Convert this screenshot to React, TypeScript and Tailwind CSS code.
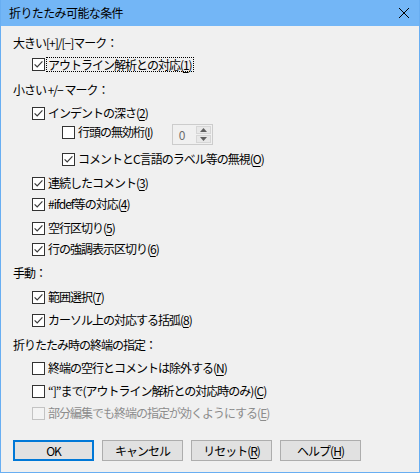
import React from "react";

const font = { fontFamily: '"Noto Sans CJK JP", "Noto Sans", sans-serif' };

function Label({ text }: { text: string }) {
  const i = text.indexOf("&");
  if (i < 0) return <>{text}</>;
  return (
    <>
      {text.slice(0, i)}
      <span className="underline underline-offset-[2px]">{text[i + 1]}</span>
      {text.slice(i + 2)}
    </>
  );
}

function Box({ checked, disabled }: { checked?: boolean; disabled?: boolean }) {
  return (
    <span
      className={
        disabled
          ? "grid size-[13px] shrink-0 place-items-center border border-[#c3c3c3] bg-[#f3f3f3]"
          : "grid size-[13px] shrink-0 place-items-center border border-[#333333] bg-white"
      }
    >
      {checked && (
        <svg width="11" height="11" viewBox="0 0 11 11">
          <path d="M1.6 5.4 L4.2 8 L9.4 2.4" fill="none" stroke="#3a3a3a" strokeWidth="1.2" />
        </svg>
      )}
    </span>
  );
}

function Check({
  label,
  checked = false,
  disabled = false,
  focus = false,
  className = "",
  children,
}: {
  label: string;
  checked?: boolean;
  disabled?: boolean;
  focus?: boolean;
  className?: string;
  children?: React.ReactNode;
}) {
  return (
    <div className={`flex h-[14px] items-center ${className}`}>
      <Box checked={checked} disabled={disabled} />
      <span
        className={
          focus
            ? "ml-[1px] border border-dotted border-black px-[1px] leading-[13px]"
            : disabled
              ? "ml-[3px] text-[#8c8c8c]"
              : "ml-[3px]"
        }
      >
        <Label text={label} />
      </span>
      {children}
    </div>
  );
}

function Btn({ label, primary = false }: { label: string; primary?: boolean }) {
  return (
    <button
      className={
        primary
          ? "h-[21px] w-[81px] border-2 border-[#0078d7] bg-[#e1e1e1] text-[12px]"
          : "h-[21px] w-[81px] border border-[#adadad] bg-[#e1e1e1] text-[12px]"
      }
    >
      <Label text={label} />
    </button>
  );
}

export default function App() {
  return (
    <div
      className="flex h-[473px] w-[420px] flex-col border-x border-b border-[#68aef2] bg-[#f0f0f0] text-[12px] tracking-[-1px] text-black"
      style={font}
    >
      <div className="flex h-[26px] shrink-0 items-center bg-[#73b6f6] pl-[8px]">
        <span className="tracking-[-0.6px]">折りたたみ可能な条件</span>
        <svg className="ml-auto mr-[9px]" width="12" height="12" viewBox="0 0 12 12">
          <path d="M1 1 L11 11 M11 1 L1 11" stroke="#000" strokeWidth="1" />
        </svg>
      </div>
      <div className="flex flex-col pl-[12px]">
        <div className="mt-[10px] flex h-[14px] items-center">大きい[+]/[−]マーク：</div>
        <div className="ml-[19px] flex flex-col">
          <Check className="mt-[7px]" checked focus label="アウトライン解析との対応(&1)" />
        </div>
        <div className="mt-[12px] flex h-[14px] items-center">小さい +/− マーク：</div>
        <div className="ml-[19px] flex flex-col">
          <Check className="mt-[9px]" checked label="インデントの深さ(&2)" />
          <Check className="mt-[5px] ml-[30px]" label="行頭の無効桁(&I)">
            <div className="ml-[19px] -mt-[1px] flex h-[21px] w-[41px] self-start border border-[#cccccc] bg-[#f0f0f0]">
              <span className="pl-[6px] pt-[1px] text-[#6d6d6d]">0</span>
              <div className="ml-auto flex w-[17px] flex-col gap-[1px] p-[1px]">
                <span className="grid h-[8px] place-items-center border border-[#d6d6d6] bg-[#e8e8e8]">
                  <svg width="7" height="4" viewBox="0 0 7 4">
                    <path d="M0 4 L3.5 0 L7 4 Z" fill="#606060" />
                  </svg>
                </span>
                <span className="grid h-[8px] place-items-center border border-[#d6d6d6] bg-[#e8e8e8]">
                  <svg width="7" height="4" viewBox="0 0 7 4">
                    <path d="M0 0 L7 0 L3.5 4 Z" fill="#606060" />
                  </svg>
                </span>
              </div>
            </div>
          </Check>
          <Check className="mt-[13px] ml-[30px]" checked label="コメントとC言語のラベル等の無視(&O)" />
          <Check className="mt-[10px]" checked label="連続したコメント(&3)" />
          <Check className="mt-[7px]" checked label="#ifdef等の対応(&4)" />
          <Check className="mt-[10px]" checked label="空行区切り(&5)" />
          <Check className="mt-[7px]" checked label="行の強調表示区切り(&6)" />
        </div>
        <div className="mt-[10px] flex h-[14px] items-center">手動：</div>
        <div className="ml-[19px] flex flex-col">
          <Check className="mt-[10px]" checked label="範囲選択(&7)" />
          <Check className="mt-[9px]" checked label="カーソル上の対応する括弧(&8)" />
        </div>
        <div className="mt-[11px] flex h-[14px] items-center">折りたたみ時の終端の指定：</div>
        <div className="ml-[19px] flex flex-col">
          <Check className="mt-[9px]" label="終端の空行とコメントは除外する(&N)" />
          <Check className="mt-[9px]" label="“]”まで(アウトライン解析との対応時のみ)(&C)" />
          <Check className="mt-[8px]" disabled label="部分編集でも終端の指定が効くようにする(&E)" />
        </div>
        <div className="mt-[20px] flex gap-[8px]">
          <Btn primary label="OK" />
          <Btn label="キャンセル" />
          <Btn label="リセット(&R)" />
          <Btn label="ヘルプ(&H)" />
        </div>
      </div>
    </div>
  );
}
